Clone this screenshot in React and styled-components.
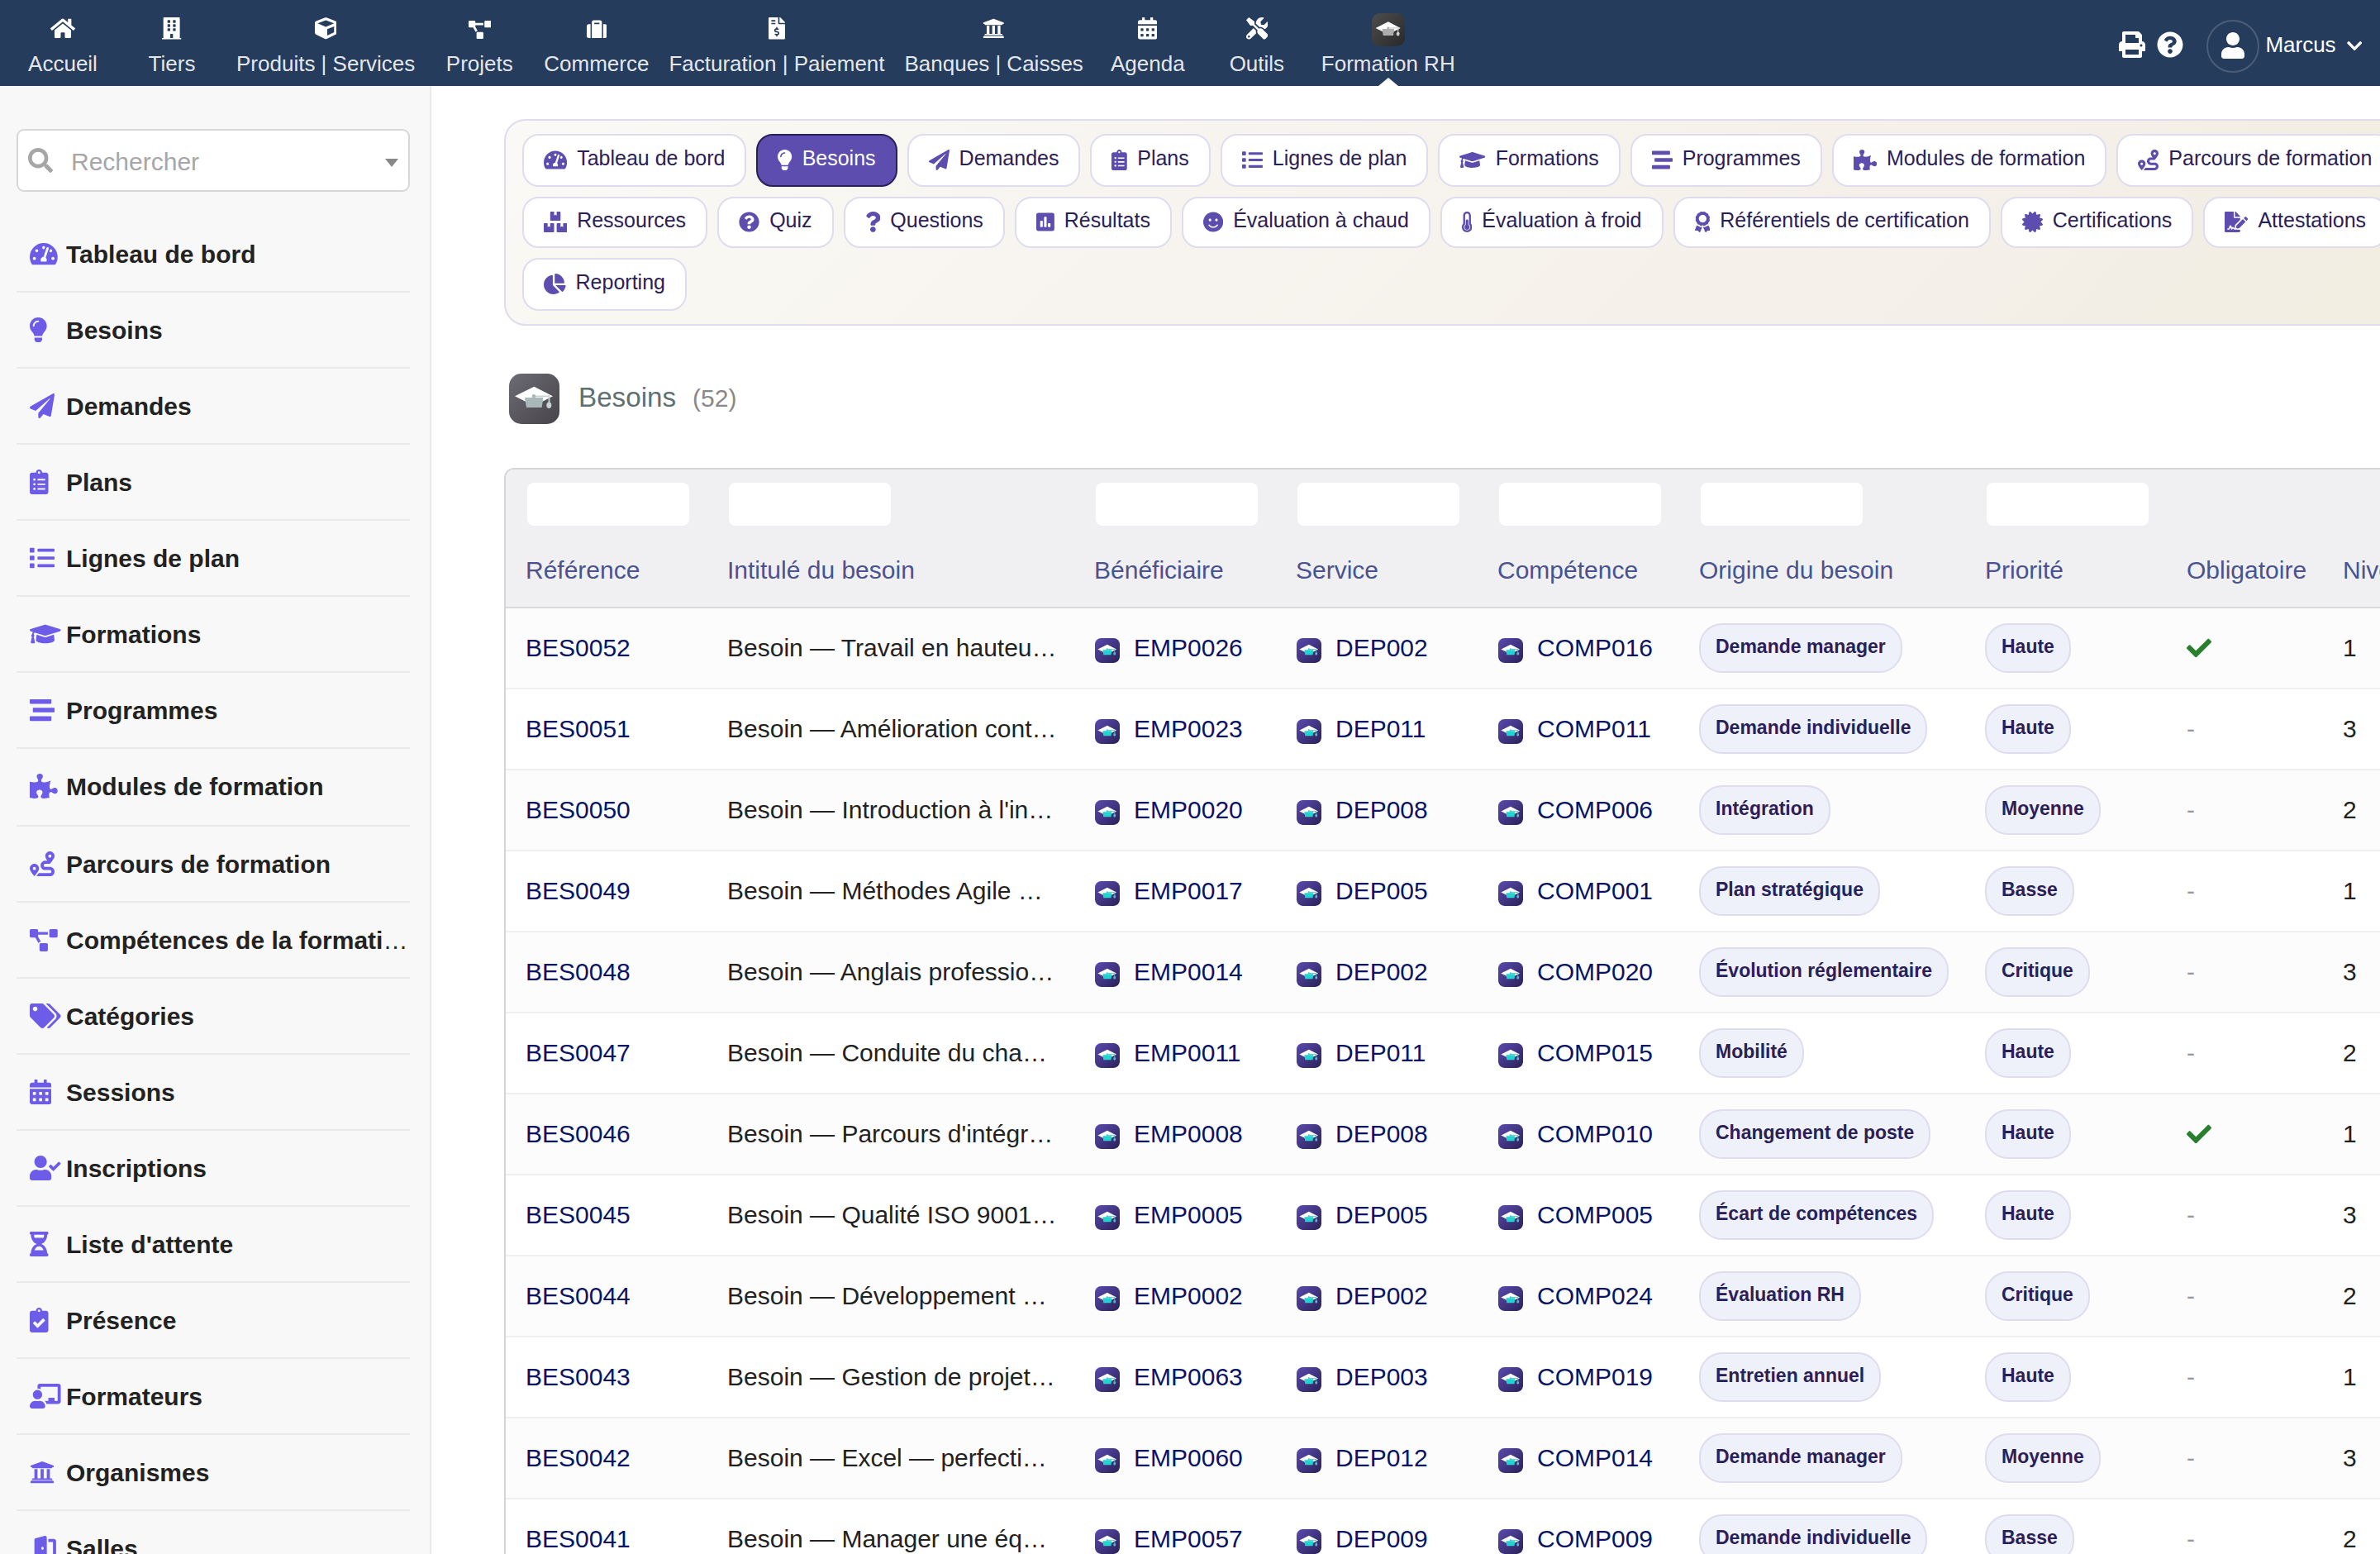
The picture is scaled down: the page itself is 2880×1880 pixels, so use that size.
import React from 'react';
import styled, { createGlobalStyle, css } from 'styled-components';
import {
  FaAward,
  FaBoxes,
  FaBuilding,
  FaCalendarAlt,
  FaCertificate,
  FaChalkboardTeacher,
  FaChartPie,
  FaCheck,
  FaChevronDown,
  FaClipboardCheck,
  FaClipboardList,
  FaCube,
  FaDoorOpen,
  FaFileInvoiceDollar,
  FaFileSignature,
  FaGraduationCap,
  FaHome,
  FaHourglassHalf,
  FaLightbulb,
  FaList,
  FaPaperPlane,
  FaPoll,
  FaPrint,
  FaProjectDiagram,
  FaPuzzlePiece,
  FaQuestion,
  FaQuestionCircle,
  FaRoute,
  FaSearch,
  FaSmile,
  FaStream,
  FaSuitcase,
  FaTachometerAlt,
  FaTags,
  FaThermometerHalf,
  FaTools,
  FaUniversity,
  FaUser,
  FaUserCheck,
} from 'react-icons/fa';

const GlobalStyle = createGlobalStyle`
  * {
    box-sizing: border-box;
  }
  body {
    margin: 0;
    background: #fff;
    color: #222;
    font-family: 'Liberation Sans', Arial, sans-serif;
    font-size: 30px;
    overflow: hidden;
  }
`;

// glyph widths in font units, for the icons that are not 512 wide
const glyphWidths = new Map([
  [FaAward, 384],
  [FaBoxes, 576],
  [FaBuilding, 448],
  [FaCalendarAlt, 448],
  [FaChalkboardTeacher, 640],
  [FaChartPie, 544],
  [FaChevronDown, 448],
  [FaClipboardCheck, 384],
  [FaClipboardList, 384],
  [FaDoorOpen, 640],
  [FaFileInvoiceDollar, 384],
  [FaFileSignature, 576],
  [FaGraduationCap, 640],
  [FaHome, 576],
  [FaHourglassHalf, 384],
  [FaLightbulb, 352],
  [FaPoll, 448],
  [FaProjectDiagram, 640],
  [FaPuzzlePiece, 576],
  [FaQuestion, 384],
  [FaSmile, 496],
  [FaTachometerAlt, 576],
  [FaTags, 640],
  [FaThermometerHalf, 256],
  [FaUser, 448],
  [FaUserCheck, 640],
]);

const GlyphBox = styled.span`
  display: block;
  flex: none;
  width: ${({ $units }) => $units / 512}em;
  height: 1em;
  ${({ $size }) => $size && `font-size: ${$size}px;`}

  svg {
    display: block;
    width: 100%;
    height: 100%;
  }
`;

const Glyph = ({ icon: Icon, size }) => (
  <GlyphBox $units={glyphWidths.get(Icon) || 512} $size={size}>
    <Icon />
  </GlyphBox>
);

const Page = styled.div`
  width: 2880px;
  height: 1880px;
  display: flex;
  flex-direction: column;
  overflow: hidden;
`;

/* ---------- top bar ---------- */

const TopBar = styled.header`
  flex: none;
  height: 104px;
  padding: 0 22px 0 10px;
  display: flex;
  justify-content: space-between;
  background: #263c5c;
  color: #fff;
`;

const TopMenu = styled.nav`
  display: flex;
`;

const TopItem = styled.a`
  position: relative;
  min-width: 132px;
  padding: 0 12px;
  display: flex;
  flex-direction: column;
  align-items: center;
  ${({ $active }) =>
    $active &&
    css`
      &::after {
        content: '';
        position: absolute;
        bottom: 0;
        left: 50%;
        margin-left: -12px;
        border: 12px solid transparent;
        border-top: 0;
        border-bottom: 10px solid #fff;
      }
    `}
`;

const TopIcon = styled.span`
  height: 62px;
  padding-top: ${({ $offset }) => $offset || 21}px;
  font-size: 26.6px;
`;

const TopLabel = styled.span`
  font-size: 26px;
  line-height: 30px;
  white-space: nowrap;
  color: rgba(255, 255, 255, 0.9);
`;

const UserTools = styled.div`
  display: flex;
  align-items: center;
  height: 110px;
  font-size: 32px;
`;

const ToolIcon = styled.span`
  margin: 0 14px 0 0;
  padding-bottom: 2px;
`;

const Avatar = styled.span`
  width: 64px;
  height: 64px;
  margin: 2px 7px 0 14px;
  padding-bottom: 3px;
  display: flex;
  align-items: center;
  justify-content: center;
  border: 2px solid #4b5d78;
  border-radius: 50%;
`;

const UserName = styled.span`
  padding-bottom: 2px;
  margin-right: 13px;
  font-size: 26px;
`;

/* ---------- sidebar ---------- */

const Body = styled.div`
  flex: 1;
  display: flex;
  min-height: 0;
`;

const Sidebar = styled.aside`
  flex: none;
  width: 522px;
  padding: 52px 24px 0 20px;
  overflow: hidden;
  background: #f8f8f8;
  border-right: 2px solid #e9e9e9;
`;

const SearchBox = styled.div`
  display: flex;
  align-items: center;
  height: 76px;
  margin-bottom: 30px;
  padding: 0 12px;
  background: #fff;
  border: 2px solid #d7d7d7;
  border-radius: 9px;
  color: #a6a6a6;
`;

const SearchText = styled.span`
  flex: 1;
  padding: 3px 0 0 22px;
`;

const SelectArrow = styled.span`
  margin-top: 5px;
  border: 8px solid transparent;
  border-top: 10px solid #888;
  border-bottom: 0;
`;

const MenuRow = styled.a`
  display: flex;
  align-items: center;
  height: ${({ $tall }) => ($tall ? 94 : 92)}px;
  padding-bottom: ${({ $tall }) => ($tall ? 2 : 0)}px;
  border-bottom: 2px solid #e9e9e9;
`;

const MenuIcon = styled.span`
  flex: none;
  width: 60px;
  padding-left: 16px;
  color: #6c5ce7;
`;

const MenuLabel = styled.span`
  flex: 1;
  min-width: 0;
  padding-top: 2px;
  overflow: hidden;
  text-overflow: ellipsis;
  white-space: nowrap;

  b {
    font-weight: 700;
  }
`;

/* ---------- content ---------- */

const Main = styled.main`
  flex: 1;
  min-width: 0;
  overflow: hidden;
  padding: 40px 0 0 88px;
`;

const ChipPanel = styled.div`
  display: flex;
  flex-direction: column;
  gap: 12px;
  width: 2600px;
  height: 250px;
  padding: 16px 20px;
  border: 2px solid #dfdcef;
  border-radius: 26px;
  background: linear-gradient(135deg, #faf9f5 0%, #f4efe8 68%, #f1ede0 90%);
`;

const ChipRow = styled.div`
  display: flex;
  gap: 12px;
  height: ${({ $height }) => $height}px;
`;

const Chip = styled.a`
  flex: none;
  display: flex;
  align-items: center;
  gap: 12px;
  padding: 0 24px 5px;
  border: 2px solid ${({ $active }) => ($active ? '#2a2058' : '#dfdcef')};
  border-radius: 20px;
  background: ${({ $active }) => ($active ? '#5d4dae' : '#fff')};
  color: ${({ $active }) => ($active ? '#fff' : '#2a2058')};
  font-size: 25px;
  white-space: nowrap;

  ${GlyphBox} {
    margin-top: 3px;
    color: ${({ $active }) => ($active ? '#fff' : '#5d4dae')};
  }
`;

const TitleBar = styled.div`
  display: flex;
  align-items: center;
  height: 61px;
  margin: 58px 0 53px 6px;
`;

const Title = styled.h1`
  margin: 0 20px 4px 23px;
  font-size: 33.2px;
  font-weight: 400;
  color: #5f7072;
`;

const Count = styled.span`
  padding-bottom: 2px;
  font-size: 30px;
  color: #888;
`;

const Table = styled.div`
  width: 2600px;
  border: 2px solid #d6d6d8;
  border-radius: 12px;
  overflow: hidden;
`;

const rowGrid = css`
  display: grid;
  grid-template-columns: 244px 444px 244px 244px 244px 346px 244px 189px 1fr;
  padding-left: 24px;
`;

const TableHead = styled.div`
  height: 168px;
  padding-top: 16px;
  background: #f0f0f3;
  border-bottom: 2px solid #d9d9d9;
`;

const FilterRow = styled.div`
  ${rowGrid}
  height: 52px;
`;

const FilterField = styled.span`
  width: 196px;
  margin-left: 2px;
  background: #fff;
  border-radius: 8px;
`;

const HeadRow = styled.div`
  ${rowGrid}
  padding-top: 36px;
  line-height: 36px;
  color: #4a538f;
`;

const Row = styled.div`
  ${rowGrid}
  align-items: center;
  height: 98px;
  background: ${({ $odd }) => ($odd ? '#fcfcfc' : '#fff')};
  border-bottom: 2px solid #efefef;
  white-space: nowrap;
`;

const Cell = styled.span`
  display: flex;
  align-items: center;
`;

const RefLink = styled.a`
  display: flex;
  align-items: center;
  gap: 17px;
  color: #0a1464;

  svg {
    margin: 5px 0 0 1px;
  }
`;

const Pill = styled.span`
  height: 60px;
  padding: 0 18px 4px;
  display: flex;
  align-items: center;
  border: 2px solid #dfdcef;
  border-radius: 28px;
  background: #eef0fa;
  color: #2a2058;
  font-size: 23px;
  font-weight: 700;
`;

const Yes = styled.span`
  color: #2a7f2e;
`;

const No = styled.span`
  color: #999;
`;

const LogoSvg = styled.svg`
  display: block;
  flex: none;
  width: ${({ $size }) => $size}px;
  height: ${({ $size }) => $size}px;
`;

const capThemes = {
  topbar: { from: '#4d4d4d', to: '#292929', base: '#adadad', tassel: '#d0d0d0' },
  title: { from: '#6d6b73', to: '#47454a', base: '#a9b8b8', tassel: '#c6d4d2' },
  list: { from: '#5a4aae', to: '#2a2158', base: '#22d3cf', tassel: '#5fb9c4' },
};

const CapLogo = ({ theme, size }) => {
  const { from, to, base, tassel } = capThemes[theme];
  return (
    <LogoSvg viewBox="0 0 61 61" $size={size}>
      <defs>
        <linearGradient id={`cap-${theme}`} x1="0" y1="0" x2="1" y2="1">
          <stop offset="0" stopColor={from} />
          <stop offset="1" stopColor={to} />
        </linearGradient>
      </defs>
      <rect width="61" height="61" rx="15" fill={`url(#cap-${theme})`} />
      <path d="M7 27.3 30.3 15.7 53 27.3 30.3 39Z" fill="#fff" />
      <path d="M19 29H41.3L39.7 41H21Z" fill={base} />
      <path d="M30 27.3H48.5V36" fill="none" stroke={tassel} strokeWidth="1.8" />
      <circle cx="30" cy="27.3" r="2.2" fill={base} />
      <ellipse cx="48.3" cy="38.3" rx="3" ry="3.7" fill={tassel} />
    </LogoSvg>
  );
};

const topMenu = [
  { label: 'Accueil', icon: FaHome },
  { label: 'Tiers', icon: FaBuilding },
  { label: 'Produits | Services', icon: FaCube },
  { label: 'Projets', icon: FaProjectDiagram, size: 22, offset: 25 },
  { label: 'Commerce', icon: FaSuitcase, size: 24.5, offset: 23 },
  { label: 'Facturation | Paiement', icon: FaFileInvoiceDollar },
  { label: 'Banques | Caisses', icon: FaUniversity },
  { label: 'Agenda', icon: FaCalendarAlt },
  { label: 'Outils', icon: FaTools },
];

const sideMenu = [
  { label: 'Tableau de bord', icon: FaTachometerAlt },
  { label: 'Besoins', icon: FaLightbulb },
  { label: 'Demandes', icon: FaPaperPlane },
  { label: 'Plans', icon: FaClipboardList },
  { label: 'Lignes de plan', icon: FaList },
  { label: 'Formations', icon: FaGraduationCap },
  { label: 'Programmes', icon: FaStream },
  { label: 'Modules de formation', icon: FaPuzzlePiece, tall: true },
  { label: 'Parcours de formation', icon: FaRoute },
  { label: 'Compétences de la formation', icon: FaProjectDiagram, size: 27 },
  { label: 'Catégories', icon: FaTags },
  { label: 'Sessions', icon: FaCalendarAlt },
  { label: 'Inscriptions', icon: FaUserCheck },
  { label: "Liste d'attente", icon: FaHourglassHalf },
  { label: 'Présence', icon: FaClipboardCheck },
  { label: 'Formateurs', icon: FaChalkboardTeacher },
  { label: 'Organismes', icon: FaUniversity },
  { label: 'Salles', icon: FaDoorOpen },
];

const chipRows = [
  {
    height: 64,
    chips: [
      { label: 'Tableau de bord', icon: FaTachometerAlt },
      { label: 'Besoins', icon: FaLightbulb, active: true },
      { label: 'Demandes', icon: FaPaperPlane },
      { label: 'Plans', icon: FaClipboardList },
      { label: 'Lignes de plan', icon: FaList },
      { label: 'Formations', icon: FaGraduationCap },
      { label: 'Programmes', icon: FaStream },
      { label: 'Modules de formation', icon: FaPuzzlePiece },
      { label: 'Parcours de formation', icon: FaRoute },
    ],
  },
  {
    height: 62,
    chips: [
      { label: 'Ressources', icon: FaBoxes },
      { label: 'Quiz', icon: FaQuestionCircle },
      { label: 'Questions', icon: FaQuestion },
      { label: 'Résultats', icon: FaPoll },
      { label: 'Évaluation à chaud', icon: FaSmile },
      { label: 'Évaluation à froid', icon: FaThermometerHalf },
      { label: 'Référentiels de certification', icon: FaAward },
      { label: 'Certifications', icon: FaCertificate },
      { label: 'Attestations', icon: FaFileSignature },
    ],
  },
  {
    height: 64,
    chips: [{ label: 'Reporting', icon: FaChartPie }],
  },
];

const columns = [
  { label: 'Référence', filter: true },
  { label: 'Intitulé du besoin', filter: true },
  { label: 'Bénéficiaire', filter: true },
  { label: 'Service', filter: true },
  { label: 'Compétence', filter: true },
  { label: 'Origine du besoin', filter: true },
  { label: 'Priorité', filter: true },
  { label: 'Obligatoire' },
  { label: 'Niveau' },
];

const needs = [
  ['BES0052', 'Besoin — Travail en hauteu…', 'EMP0026', 'DEP002', 'COMP016', 'Demande manager', 'Haute', true, 1],
  ['BES0051', 'Besoin — Amélioration cont…', 'EMP0023', 'DEP011', 'COMP011', 'Demande individuelle', 'Haute', false, 3],
  ['BES0050', "Besoin — Introduction à l'in…", 'EMP0020', 'DEP008', 'COMP006', 'Intégration', 'Moyenne', false, 2],
  ['BES0049', 'Besoin — Méthodes Agile …', 'EMP0017', 'DEP005', 'COMP001', 'Plan stratégique', 'Basse', false, 1],
  ['BES0048', 'Besoin — Anglais professio…', 'EMP0014', 'DEP002', 'COMP020', 'Évolution réglementaire', 'Critique', false, 3],
  ['BES0047', 'Besoin — Conduite du cha…', 'EMP0011', 'DEP011', 'COMP015', 'Mobilité', 'Haute', false, 2],
  ['BES0046', "Besoin — Parcours d'intégr…", 'EMP0008', 'DEP008', 'COMP010', 'Changement de poste', 'Haute', true, 1],
  ['BES0045', 'Besoin — Qualité ISO 9001…', 'EMP0005', 'DEP005', 'COMP005', 'Écart de compétences', 'Haute', false, 3],
  ['BES0044', 'Besoin — Développement …', 'EMP0002', 'DEP002', 'COMP024', 'Évaluation RH', 'Critique', false, 2],
  ['BES0043', 'Besoin — Gestion de projet…', 'EMP0063', 'DEP003', 'COMP019', 'Entretien annuel', 'Haute', false, 1],
  ['BES0042', 'Besoin — Excel — perfecti…', 'EMP0060', 'DEP012', 'COMP014', 'Demande manager', 'Moyenne', false, 3],
  ['BES0041', 'Besoin — Manager une éq…', 'EMP0057', 'DEP009', 'COMP009', 'Demande individuelle', 'Basse', false, 2],
];

const LinkCell = ({ children }) => (
  <Cell>
    <RefLink>
      <CapLogo theme="list" size={30} />
      {children}
    </RefLink>
  </Cell>
);

const App = () => {
  return (
    <Page>
      <GlobalStyle />
      <TopBar>
        <TopMenu>
          {topMenu.map(({ label, icon, size, offset }) => (
            <TopItem key={label}>
              <TopIcon $offset={offset}>
                <Glyph icon={icon} size={size} />
              </TopIcon>
              <TopLabel>{label}</TopLabel>
            </TopItem>
          ))}
          <TopItem $active>
            <TopIcon $offset={16}>
              <CapLogo theme="topbar" size={40} />
            </TopIcon>
            <TopLabel>Formation RH</TopLabel>
          </TopItem>
        </TopMenu>
        <UserTools>
          <ToolIcon>
            <Glyph icon={FaPrint} />
          </ToolIcon>
          <ToolIcon>
            <Glyph icon={FaQuestionCircle} />
          </ToolIcon>
          <Avatar>
            <Glyph icon={FaUser} />
          </Avatar>
          <UserName>Marcus</UserName>
          <Glyph icon={FaChevronDown} size={21} />
        </UserTools>
      </TopBar>
      <Body>
        <Sidebar>
          <SearchBox>
            <Glyph icon={FaSearch} />
            <SearchText>Rechercher</SearchText>
            <SelectArrow />
          </SearchBox>
          {sideMenu.map(({ label, icon, size, tall }) => (
            <MenuRow key={label} $tall={tall}>
              <MenuIcon>
                <Glyph icon={icon} size={size} />
              </MenuIcon>
              <MenuLabel>
                <b>{label}</b>
              </MenuLabel>
            </MenuRow>
          ))}
        </Sidebar>
        <Main>
          <ChipPanel>
            {chipRows.map(({ height, chips }, index) => (
              <ChipRow key={index} $height={height}>
                {chips.map(({ label, icon, active }) => (
                  <Chip key={label} $active={active}>
                    <Glyph icon={icon} />
                    {label}
                  </Chip>
                ))}
              </ChipRow>
            ))}
          </ChipPanel>
          <TitleBar>
            <CapLogo theme="title" size={61} />
            <Title>Besoins</Title>
            <Count>(52)</Count>
          </TitleBar>
          <Table>
            <TableHead>
              <FilterRow>
                {columns.map(({ label, filter }) =>
                  filter ? <FilterField key={label} /> : <span key={label} />
                )}
              </FilterRow>
              <HeadRow>
                {columns.map(({ label }) => (
                  <span key={label}>{label}</span>
                ))}
              </HeadRow>
            </TableHead>
            {needs.map(([ref, title, employee, service, skill, origin, priority, required, level], index) => (
              <Row key={ref} $odd={index % 2 === 0}>
                <Cell>
                  <RefLink>{ref}</RefLink>
                </Cell>
                <Cell>{title}</Cell>
                <LinkCell>{employee}</LinkCell>
                <LinkCell>{service}</LinkCell>
                <LinkCell>{skill}</LinkCell>
                <Cell>
                  <Pill>{origin}</Pill>
                </Cell>
                <Cell>
                  <Pill>{priority}</Pill>
                </Cell>
                <Cell>
                  {required ? (
                    <Yes>
                      <Glyph icon={FaCheck} />
                    </Yes>
                  ) : (
                    <No>-</No>
                  )}
                </Cell>
                <Cell>{level}</Cell>
              </Row>
            ))}
          </Table>
        </Main>
      </Body>
    </Page>
  );
};

export default App;
